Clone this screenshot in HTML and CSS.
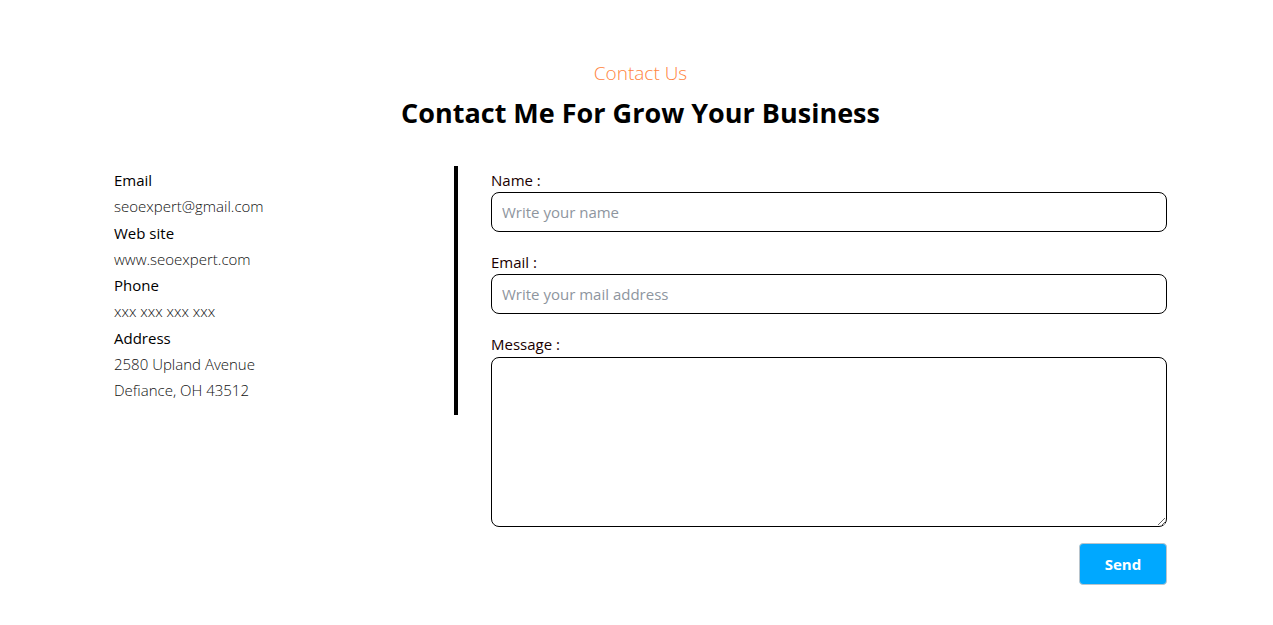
FILE: index.html
```html
<!DOCTYPE html>
<html lang="en">
<head>
<meta charset="utf-8">
<title>Contact</title>
<link rel="stylesheet" href="styles.css">
</head>
<body>
<section class="contact">
  <header class="contact-head">
    <p class="eyebrow">Contact Us</p>
    <h1 class="title">Contact Me For Grow Your Business</h1>
  </header>
  <div class="contact-body">
    <div class="info">
      <div class="info-label">Email</div>
      <div class="info-value">seoexpert@gmail.com</div>
      <div class="info-label">Web site</div>
      <div class="info-value">www.seoexpert.com</div>
      <div class="info-label">Phone</div>
      <div class="info-value">xxx xxx xxx xxx</div>
      <div class="info-label">Address</div>
      <div class="info-value">2580 Upland Avenue</div>
      <div class="info-value">Defiance, OH 43512</div>
    </div>
    <form class="form">
      <label class="field">
        <span class="field-label">Name :</span>
        <input class="input" type="text" placeholder="Write your name">
      </label>
      <label class="field">
        <span class="field-label">Email :</span>
        <input class="input" type="email" placeholder="Write your mail address">
      </label>
      <label class="field">
        <span class="field-label">Message :</span>
        <textarea class="input textarea"></textarea>
      </label>
      <div class="actions">
        <button class="send" type="button">Send</button>
      </div>
    </form>
  </div>
</section>
</body>
</html>
```
FILE: styles.css
```css
* { box-sizing: border-box; }
html, body { margin: 0; padding: 0; background: #fff; }
body {
  font-family: "Open Sans", "Noto Sans", sans-serif;
  color: #000;
}
.contact {
  width: 1053px;
  margin-left: 114px;
  padding-top: 58px;
}
.contact-head { text-align: center; }
.eyebrow {
  margin: 0;
  font-size: 19px;
  font-weight: 300;
  color: #ff8440;
  line-height: 30px;
}
.title {
  margin: 7px 0 0;
  font-size: 27px;
  font-weight: 700;
  line-height: 36px;
}
.contact-body {
  display: flex;
  align-items: flex-start;
  margin-top: 35px;
}
.info {
  width: 344px;
  border-right: 4px solid #000;
  padding-top: 1px;
  padding-bottom: 11px;
}
.info-label {
  font-size: 15px;
  line-height: 26.3px;
  color: #000;
}
.info-value {
  font-size: 15px;
  font-weight: 300;
  line-height: 26.3px;
  color: #111;
}
.form {
  flex: 1;
  padding-left: 33px;
  padding-top: 2px;
}
.field {
  display: block;
  margin-bottom: 18px;
}
.field-label {
  display: block;
  font-size: 15px;
  line-height: 24px;
  color: #1a0000;
}
.input {
  display: block;
  width: 100%;
  height: 40px;
  border: 1px solid #000;
  border-radius: 8px;
  padding: 0 10px;
  font-family: inherit;
  font-size: 15px;
  color: #000;
  background: #fff;
  outline: none;
}
.input::placeholder { color: #8e959e; }
.textarea {
  height: 170px;
  margin-top: 1px;
  resize: vertical;
}
.field:last-of-type { margin-bottom: 16px; }
.actions {
  display: flex;
  justify-content: flex-end;
}
.send {
  width: 88px;
  height: 42px;
  background: #00a8ff;
  border: 1px solid #b8c4cc;
  border-radius: 4px;
  color: #fff;
  font-family: inherit;
  font-size: 15px;
  font-weight: 700;
}
```
